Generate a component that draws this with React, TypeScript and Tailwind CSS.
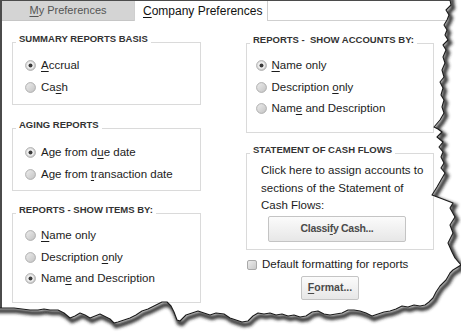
import React from "react";

const FONT = "font-['Liberation_Sans',Arial,sans-serif]";

function Radio({ checked }: { checked?: boolean }) {
  return (
    <svg width="11" height="11" viewBox="0 0 11 11" className="shrink-0">
      <defs>
        <linearGradient id="rgrad" x1="0" y1="0" x2="1" y2="1">
          <stop offset="0" stopColor="#eeeeee" />
          <stop offset="1" stopColor="#c2c2c2" />
        </linearGradient>
      </defs>
      <circle cx="5.5" cy="5.5" r="4.9" fill="url(#rgrad)" stroke="#a8a8a8" strokeWidth="0.9" />
      {checked && (
        <>
          <circle cx="5.5" cy="5.5" r="3.3" fill="#f3f3f3" />
          <circle cx="5.5" cy="5.5" r="2" fill="#3a3a3a" />
        </>
      )}
    </svg>
  );
}

function RadioRow({ checked, children }: { checked?: boolean; children: React.ReactNode }) {
  return (
    <div className="flex items-center h-[21.5px] gap-[5px] text-[11.5px] text-[#1c1c1c]">
      <Radio checked={checked} />
      <span>{children}</span>
    </div>
  );
}

function U({ children }: { children: React.ReactNode }) {
  return <span className="underline underline-offset-[1.5px]">{children}</span>;
}

function Group({
  title,
  className = "",
  inner = "",
  children,
}: {
  title: string;
  className?: string;
  inner?: string;
  children: React.ReactNode;
}) {
  return (
    <fieldset className={`border border-[#dadada] px-[3px] ${className}`}>
      <legend className="px-[3px] text-[9.5px] font-bold leading-[10px] pb-[7px] text-[#333] whitespace-pre">
        {title}
      </legend>
      <div className={inner}>{children}</div>
    </fieldset>
  );
}

function Btn({ className = "", children }: { className?: string; children: React.ReactNode }) {
  return (
    <div
      className={`flex items-center justify-center border border-[#c4c4c4] rounded-[2px] bg-gradient-to-b from-[#fbfbfb] to-[#e7e7e7] text-[10.5px] font-bold text-[#4a4a4a] ${className}`}
    >
      {children}
    </div>
  );
}

const right: [number, number][] = [
  [450, -5], [450, 0], [451, 5], [446, 10], [449, 15], [447, 20], [444, 25], [447, 30], [445, 35],
  [448, 40], [443, 45], [446, 50], [443, 57], [445, 63], [442, 70], [444, 77], [440, 82], [443, 88],
  [441, 95], [444, 100], [442, 107], [444, 113], [440, 120], [434, 127], [438, 129], [442, 132],
  [437, 137], [443, 142], [439, 147], [443, 152], [441, 157], [444, 163], [441, 168], [445, 173],
  [441, 180], [437, 187], [432, 195], [440, 198], [453, 203], [450, 208], [455, 217], [450, 225],
  [453, 233], [448, 243], [452, 252], [455, 258], [461, 265], [453, 270], [450, 273], [446, 280],
  [440, 286], [436, 292], [433, 298], [429, 302],
];
const bottom: [number, number][] = [
  [425, 305], [420, 306], [414, 305], [408, 307], [402, 306], [396, 309], [390, 311], [384, 312],
  [378, 314], [372, 316], [366, 313], [360, 311], [354, 310], [348, 310], [342, 313], [336, 314],
  [330, 315], [324, 314], [318, 311], [312, 312], [306, 316], [300, 317], [294, 315], [288, 316],
  [282, 314], [276, 315], [270, 313], [264, 314], [258, 313], [253, 316], [248, 321], [242, 322],
  [236, 320], [230, 318], [224, 314], [216, 313], [210, 315], [204, 313], [198, 311], [192, 313],
  [186, 315], [180, 321], [177, 320], [174, 312], [171, 306], [167, 302], [162, 302], [158, 304],
  [154, 306], [148, 309], [142, 311], [136, 315], [130, 318], [124, 320], [118, 322], [114, 323],
  [110, 319], [104, 316], [100, 314], [95, 316], [90, 318], [85, 315], [80, 313], [75, 316],
  [70, 318], [64, 313], [58, 310], [50, 310], [44, 309], [38, 310], [30, 310], [22, 309], [14, 308],
  [6, 308], [0, 308], [-5, 308],
];

function TornEdge() {
  const edge = [...right, ...bottom];
  const pts = edge.map((p) => p.join(",")).join(" ");
  const paper = `M${edge.map((p) => p.join(" ")).join(" L")} L-5 -5 Z`;
  const outside = `M-10 -10 H480 V350 H-10 Z ${paper}`;
  return (
    <svg className="absolute inset-0 pointer-events-none" width="461" height="333" viewBox="0 0 461 333">
      <defs>
        <clipPath id="outsideClip">
          <path d={outside} clipRule="evenodd" />
        </clipPath>
        <filter id="shblur" x="-10%" y="-10%" width="120%" height="120%">
          <feGaussianBlur stdDeviation="1.4" />
        </filter>
      </defs>
      <path d={outside} fill="#ffffff" fillRule="evenodd" />
      <g clipPath="url(#outsideClip)">
        <polyline
          points={pts}
          transform="translate(2,3)"
          fill="none"
          stroke="#2a2a2a"
          strokeWidth="4.5"
          strokeOpacity="0.9"
          filter="url(#shblur)"
        />
      </g>
      <polyline points={pts} fill="none" stroke="#1a1a1a" strokeWidth="1.1" strokeLinejoin="round" />
    </svg>
  );
}

export default function App() {
  return (
    <div className={`relative w-[461px] h-[333px] overflow-hidden bg-white ${FONT} text-[#1c1c1c]`}>
      <div className="h-full border-t border-l-2 border-[#4b4b4b] flex flex-col">
        {/* tabs */}
        <div className="flex h-[20px] shrink-0">
          <div className="w-[132px] bg-[#d4d4d4] border-b border-[#c6c6c6] flex items-center justify-center text-[11px] text-[#555]">
            <span>
              <U>M</U>y Preferences
            </span>
          </div>
          <div className="w-[134px] bg-white border-x border-[#cfcfcf] flex items-center pl-[8px] text-[12px] text-[#111]">
            <span>
              <U>C</U>ompany Preferences
            </span>
          </div>
          <div className="flex-1 border-b border-[#cfcfcf]" />
        </div>

        {/* content */}
        <div className="flex pl-[10px] pt-[13px]">
          {/* left column */}
          <div className="w-[189px] flex flex-col">
            <Group title="SUMMARY REPORTS BASIS" inner="pl-[9px] pt-[4px] pb-[6px]">
              <RadioRow checked>
                <U>A</U>ccrual
              </RadioRow>
              <RadioRow>
                Ca<U>s</U>h
              </RadioRow>
            </Group>
            <Group title="AGING REPORTS" className="mt-[15px]" inner="pl-[9px] pt-[5px] pb-[5px]">
              <RadioRow checked>
                Age from d<U>u</U>e date
              </RadioRow>
              <RadioRow>
                Age from <U>t</U>ransaction date
              </RadioRow>
            </Group>
            <Group title="REPORTS - SHOW ITEMS BY:" className="mt-[14px]" inner="pl-[9px] pt-[3px] pb-[12.5px]">
              <RadioRow>
                <U>N</U>ame only
              </RadioRow>
              <RadioRow>
                Description <U>o</U>nly
              </RadioRow>
              <RadioRow checked>
                Nam<U>e</U> and Description
              </RadioRow>
            </Group>
          </div>

          {/* right column */}
          <div className="ml-[45px] w-[188px] flex flex-col pt-[1px]">
            <Group title="REPORTS -  SHOW ACCOUNTS BY:" inner="pl-[5.5px] pt-[3px] pb-[12.5px]">
              <RadioRow checked>
                <U>N</U>ame only
              </RadioRow>
              <RadioRow>
                Description <U>o</U>nly
              </RadioRow>
              <RadioRow>
                Nam<U>e</U> and Description
              </RadioRow>
            </Group>
            <Group title="STATEMENT OF CASH FLOWS" className="mt-[12px]" inner="pl-[11px] pb-[7.5px]">
              <p className="text-[11.5px] leading-[17.5px] text-[#1c1c1c]">
                Click here to assign accounts to
                <br />
                sections of the Statement of
                <br />
                Cash Flows:
              </p>
              <Btn className="mt-[1px] ml-[7px] w-[138px] h-[26px] tracking-[-0.3px]">
                <span>
                  Classi<U>f</U>y Cash...
                </span>
              </Btn>
            </Group>
            <div className="mt-[5px] h-[20px] flex items-center gap-[5px] pl-[1px] text-[11.5px]">
              <div className="w-[10px] h-[10px] rounded-[2px] border border-[#a9a9a9] bg-gradient-to-br from-[#ececec] to-[#c9c9c9] shrink-0" />
              <span>Default formatting for reports</span>
            </div>
            <Btn className="mt-[1px] ml-[55px] w-[58px] h-[24px]">
              <span>
                <U>F</U>ormat...
              </span>
            </Btn>
          </div>
        </div>
      </div>
      <TornEdge />
    </div>
  );
}
